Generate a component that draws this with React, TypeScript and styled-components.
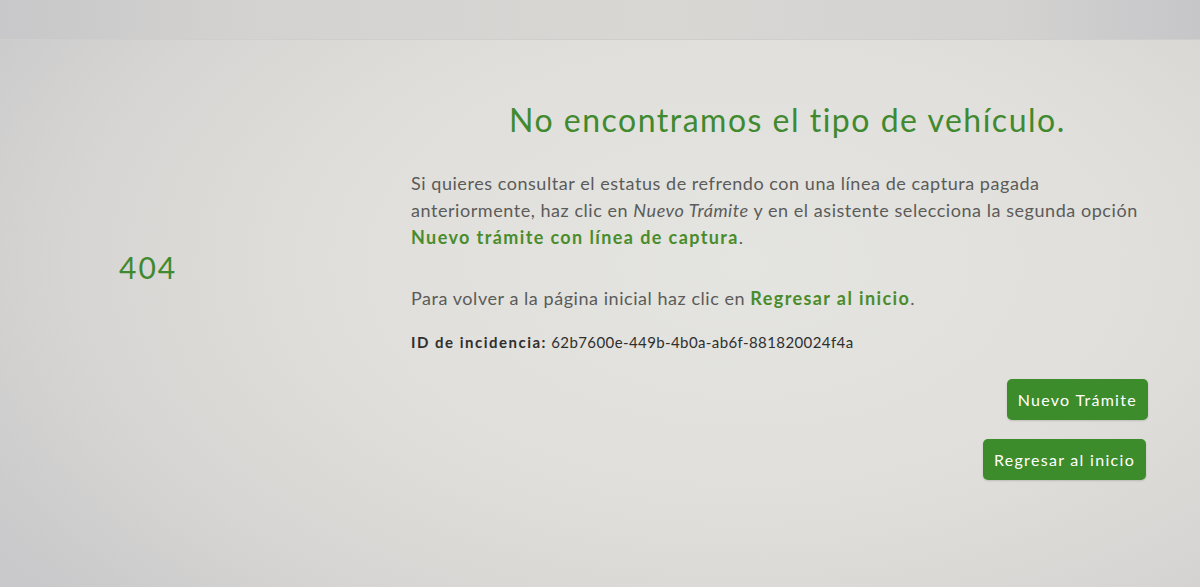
import styled, { createGlobalStyle } from "styled-components";

const colors = {
  GREEN: "#40892f",
  GREEN_TEXT: "#4a8c2c",
  BUTTON: "#3d8c2b",
  TEXT: "#5b5b59",
  DARK: "#2f2f2f",
};

const GlobalStyle = createGlobalStyle`
  *, *::before, *::after {
    box-sizing: border-box;
  }
  html, body {
    margin: 0;
    padding: 0;
  }
  body {
    font-family: "Lato", "Liberation Sans", sans-serif;
    background: #dcdbd8;
  }
`;

const App = () => {
  return (
    <>
      <GlobalStyle />
      <Page>
        <TopBar />
        <Content>
          <CodeColumn>
            <ErrorCode>404</ErrorCode>
          </CodeColumn>
          <MessageColumn>
            <Title>No encontramos el tipo de vehículo.</Title>
            <Paragraph>
              Si quieres consultar el estatus de refrendo con una línea de
              captura pagada
              <br />
              anteriormente, haz clic en <em>Nuevo Trámite</em> y en el
              asistente selecciona la segunda opción
              <br />
              <Highlight>Nuevo trámite con línea de captura</Highlight>.
            </Paragraph>
            <Paragraph $top={34}>
              Para volver a la página inicial haz clic en{" "}
              <Highlight>Regresar al inicio</Highlight>.
            </Paragraph>
            <IncidentLine>
              <IncidentLabel>ID de incidencia:</IncidentLabel>{" "}
              62b7600e-449b-4b0a-ab6f-881820024f4a
            </IncidentLine>
            <Actions>
              <ActionButton>Nuevo Trámite</ActionButton>
              <ActionButton $shift={2}>Regresar al inicio</ActionButton>
            </Actions>
          </MessageColumn>
        </Content>
      </Page>
    </>
  );
};

export const Page = styled.div`
  width: 1200px;
  height: 587px;
  overflow: hidden;
  display: flex;
  flex-direction: column;
  background: radial-gradient(
    ellipse 75% 90% at 62% 45%,
    #e4e4e0 0%,
    #e0dfdb 45%,
    #d6d5d3 75%,
    #c9c8ca 100%
  );
`;

export const TopBar = styled.div`
  height: 40px;
  flex-shrink: 0;
  background: linear-gradient(
    to right,
    #c8c7c9 0%,
    #d3d2d0 20%,
    #d8d7d4 55%,
    #d3d2d1 85%,
    #c6c5c8 100%
  );
  border-bottom: 1px solid #cfcecd;
`;

export const Content = styled.div`
  flex: 1;
  display: grid;
  grid-template-columns: 411px 1fr;
  padding-right: 52px;
`;

export const CodeColumn = styled.div`
  padding-left: 119px;
  padding-top: 209px;
`;

export const ErrorCode = styled.div`
  font-size: 30px;
  line-height: 36px;
  color: ${colors.GREEN};
  letter-spacing: 2px;
`;

export const MessageColumn = styled.div`
  display: flex;
  flex-direction: column;
  padding-top: 60px;
`;

export const Title = styled.h1`
  margin: 0 0 30px 0;
  padding-left: 98px;
  font-size: 32px;
  line-height: 40px;
  font-weight: 400;
  letter-spacing: 1.5px;
  white-space: nowrap;
  color: ${colors.GREEN};
`;

export const Paragraph = styled.p<{ $top?: number }>`
  margin: ${(p) => p.$top ?? 0}px 0 0 0;
  font-size: 18px;
  line-height: 27px;
  letter-spacing: 0.55px;
  white-space: nowrap;
  color: ${colors.TEXT};
  em {
    font-style: italic;
  }
`;

export const Highlight = styled.span`
  color: ${colors.GREEN_TEXT};
  font-weight: 700;
  letter-spacing: 1.4px;
`;

export const IncidentLine = styled.div`
  margin-top: 20px;
  font-size: 15px;
  line-height: 20px;
  color: ${colors.DARK};
  letter-spacing: 0.4px;
`;

export const IncidentLabel = styled.span`
  font-weight: 700;
  letter-spacing: 1.5px;
`;

export const Actions = styled.div`
  display: flex;
  flex-direction: column;
  align-items: flex-end;
  gap: 19px;
  margin-top: 27px;
`;

export const ActionButton = styled.button<{ $shift?: number }>`
  height: 41px;
  padding: 0 11px;
  margin-right: ${(p) => p.$shift ?? 0}px;
  border: none;
  border-radius: 5px;
  background: ${colors.BUTTON};
  color: #ffffff;
  font-family: "Lato", "Liberation Sans", sans-serif;
  font-size: 16px;
  letter-spacing: 1.3px;
  box-shadow: 0 1px 2px rgba(0, 0, 0, 0.15);
  cursor: pointer;
`;

export default App;
